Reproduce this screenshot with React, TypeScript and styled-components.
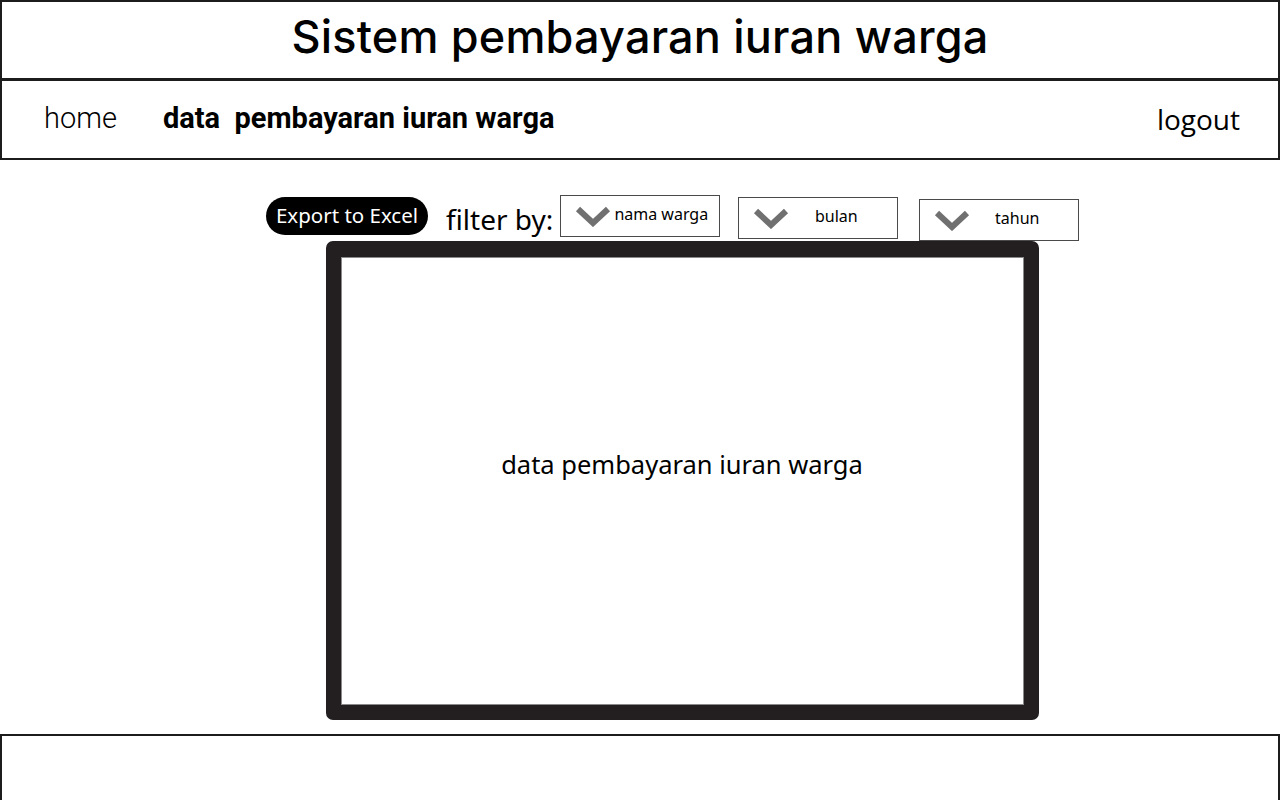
import styled, { createGlobalStyle } from "styled-components";

const GlobalStyle = createGlobalStyle`
  html, body {
    margin: 0;
    padding: 0;
    background: #ffffff;
    overflow: hidden;
  }
  * {
    box-sizing: border-box;
  }
`;

const Page = styled.div`
  width: 1280px;
  height: 800px;
  display: flex;
  flex-direction: column;
  overflow: hidden;
  font-family: "Noto Sans", "Open Sans", sans-serif;
  color: #000;

  & > * {
    flex-shrink: 0;
  }
`;

const Header = styled.header`
  height: 80px;
  border: 2px solid #1c1c1c;
  display: flex;
  align-items: center;
  justify-content: center;

  h1 {
    margin: 0;
    font-family: "Inter", "Noto Sans", sans-serif;
    font-weight: 500;
    font-size: 45px;
    letter-spacing: 0.2px;
    line-height: 1;
    padding-bottom: 8px;
  }
`;

const Nav = styled.nav`
  height: 80px;
  border: 2px solid #1c1c1c;
  border-top-width: 1px;
  display: flex;
  align-items: center;
  padding: 0 38px 0 42px;
`;

const NavLink = styled.a<{ $bold?: boolean }>`
  font-family: "Roboto", sans-serif;
  font-weight: ${(p) => (p.$bold ? 700 : 300)};
  font-size: 29px;
  white-space: pre;
  margin-right: 46px;
  margin-top: -4px;
  cursor: pointer;
`;

const Logout = styled.a`
  margin-left: auto;
  margin-top: -2px;
  font-family: "Open Sans", sans-serif;
  font-size: 28px;
  cursor: pointer;
`;

const Toolbar = styled.div`
  height: 46px;
  margin-top: 35px;
  padding-left: 266px;
  display: flex;
  align-items: flex-start;
`;

const ExportButton = styled.button`
  width: 162px;
  height: 38px;
  margin-top: 2px;
  border: none;
  border-radius: 19px;
  background: #000;
  color: #fff;
  font-family: "Noto Sans", sans-serif;
  font-size: 20.5px;
  padding: 0 0 2px;
  white-space: nowrap;
  cursor: pointer;
`;

const FilterLabel = styled.span`
  margin: 4px 7px 0 18px;
  font-family: "Noto Sans", sans-serif;
  font-size: 28px;
  line-height: 40px;
`;

const Dropdown = styled.div<{ $offset: number; $gap: number }>`
  width: 160px;
  height: 42px;
  margin-top: ${(p) => p.$offset}px;
  margin-left: ${(p) => p.$gap}px;
  border: 1px solid #4a4a4a;
  display: flex;
  align-items: center;
  padding: 0 ${(p) => (p.$gap === 0 ? 8 : 14)}px 0 14px;

  svg {
    flex: none;
  }

  span {
    flex: 1;
    text-align: center;
    font-family: "Noto Sans", sans-serif;
    font-size: 16px;
    padding-bottom: 4px;
  }
`;

const Board = styled.section`
  width: 713px;
  height: 479px;
  margin-left: 326px;
  border: 15px solid #231f20;
  border-top-width: 16px;
  border-radius: 7px;
  box-shadow: inset 0 0 0 1px #8a8a8a;
  display: flex;
  align-items: center;
  justify-content: center;

  p {
    margin: 0;
    font-family: "Noto Sans", sans-serif;
    font-size: 25.5px;
    padding: 0 1px 34px 0;
  }
`;

const Footer = styled.footer`
  height: 120px;
  margin-top: 14px;
  border: 2px solid #1c1c1c;
`;

const Chevron = () => (
  <svg width="36" height="22" viewBox="0 0 36 22">
    <polyline
      points="3,4 18,18 33,4"
      fill="none"
      stroke="#707070"
      strokeWidth="6"
      strokeLinejoin="miter"
    />
  </svg>
);

const filters = [
  { label: "nama warga", offset: 0, gap: 0 },
  { label: "bulan", offset: 2, gap: 18 },
  { label: "tahun", offset: 4, gap: 21 },
];

export default function App() {
  return (
    <Page>
      <GlobalStyle />
      <Header>
        <h1>Sistem pembayaran iuran warga</h1>
      </Header>
      <Nav>
        <NavLink>home</NavLink>
        <NavLink $bold>{"data  pembayaran iuran warga"}</NavLink>
        <Logout>logout</Logout>
      </Nav>
      <Toolbar>
        <ExportButton>Export to Excel</ExportButton>
        <FilterLabel>filter by:</FilterLabel>
        {filters.map((f) => (
          <Dropdown key={f.label} $offset={f.offset} $gap={f.gap}>
            <Chevron />
            <span>{f.label}</span>
          </Dropdown>
        ))}
      </Toolbar>
      <Board>
        <p>data pembayaran iuran warga</p>
      </Board>
      <Footer />
    </Page>
  );
}
